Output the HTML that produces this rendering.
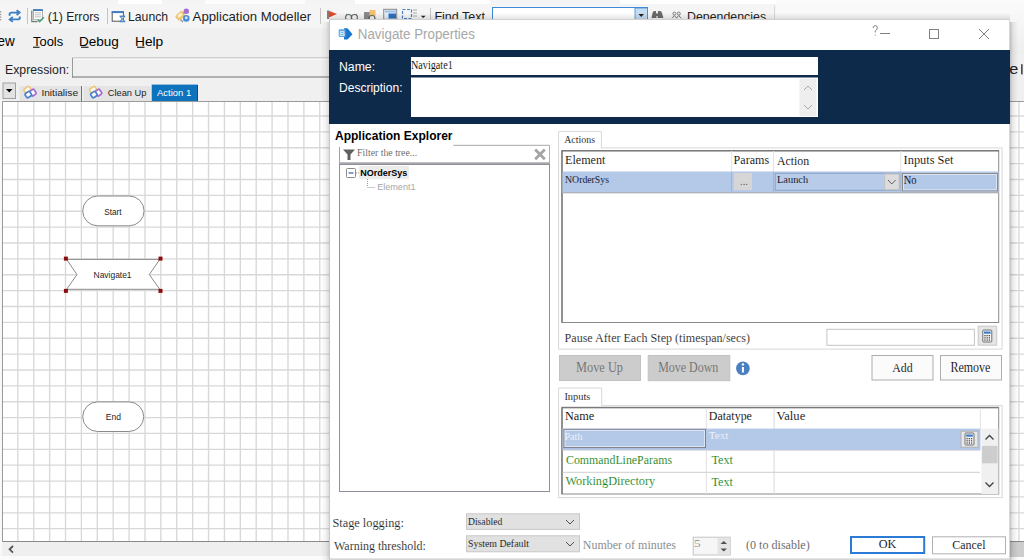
<!DOCTYPE html>
<html><head><meta charset="utf-8"><style>
html,body{margin:0;padding:0;background:#f0f0f0;width:1024px;height:560px;overflow:hidden;}
svg{display:block;}
</style></head><body>
<svg width="1024" height="560" viewBox="0 0 1024 560">
<rect x="0" y="0" width="1024" height="560" fill="#f0f0f0" rx="0" />
<rect x="0" y="0" width="1024" height="5" fill="#f4f4f4" rx="0" />
<rect x="118" y="0" width="44" height="4" fill="#ffffff" rx="0" />
<rect x="205" y="0" width="100" height="4" fill="#fcfcfc" rx="0" />
<rect x="355" y="0" width="135" height="4" fill="#ffffff" rx="0" />
<rect x="620" y="0" width="295" height="4" fill="#ffffff" rx="0" />
<rect x="0" y="5" width="780" height="23" fill="#f5f5f5" rx="0" />
<defs><linearGradient id="tg" x1="0" x2="0" y1="0" y2="1"><stop offset="0" stop-color="#fbfbfb"/><stop offset="1" stop-color="#eeeeee"/></linearGradient></defs>
<rect x="776" y="0" width="248" height="54" fill="url(#tg)"/>
<line x1="27.5" y1="8" x2="27.5" y2="24" stroke="#c4c4c4" stroke-width="1" />
<line x1="107.5" y1="8" x2="107.5" y2="24" stroke="#c4c4c4" stroke-width="1" />
<line x1="320.5" y1="8" x2="320.5" y2="24" stroke="#c4c4c4" stroke-width="1" />
<path d="M9.6 15.8 L9.6 14.2 Q9.6 12.6 11.4 12.6 L19 12.6" fill="none" stroke="#3d7fc4" stroke-width="1.9" />
<path d="M16.6 10.2 L19.6 12.6 L16.6 15" fill="none" stroke="#3d7fc4" stroke-width="1.9" />
<path d="M19.8 16.4 L19.8 17.8 Q19.8 19.4 18 19.4 L10.4 19.4" fill="none" stroke="#3d7fc4" stroke-width="1.9" />
<path d="M12.8 17 L9.8 19.4 L12.8 21.8" fill="none" stroke="#3d7fc4" stroke-width="1.9" />
<rect x="0" y="11.2" width="1.2" height="1.4" fill="#9a9a9a" rx="0" />
<rect x="0" y="13.8" width="1.2" height="1.4" fill="#9a9a9a" rx="0" />
<rect x="0" y="16.4" width="1.2" height="1.4" fill="#9a9a9a" rx="0" />
<rect x="0" y="19.0" width="1.2" height="1.4" fill="#9a9a9a" rx="0" />
<path d="M31.8 10.6 L31.8 21.6 L37.5 21.6" fill="none" stroke="#7a7a7a" stroke-width="1.2" />
<rect x="33.4" y="9.4" width="9" height="10.4" fill="#ffffff" stroke="#9a9a9a" stroke-width="0.8" rx="0" />
<rect x="33.2" y="9.2" width="9.4" height="1.8" fill="#3d7ac0" rx="0" />
<rect x="34.8" y="12.2" width="6.2" height="1.2" fill="#c8c8c8" rx="0" />
<rect x="34.8" y="14.2" width="6.2" height="1.2" fill="#c8c8c8" rx="0" />
<rect x="34.8" y="16.2" width="6.2" height="1.2" fill="#c8c8c8" rx="0" />
<path d="M37.8 19.6 L39.6 21.6 L43.8 17.2" fill="none" stroke="#4aa37a" stroke-width="1.6" />
<rect x="112.2" y="11.8" width="11.2" height="9.4" fill="#ffffff" stroke="#555" stroke-width="1" rx="0" />
<rect x="111.7" y="11.3" width="12.2" height="1.8" fill="#3d7cc9" rx="0" />
<path d="M119.5 15.5 L125.3 15.5 L125.3 16.5 L123.2 18.9 L125.3 21.3 L125.3 22.3 L119.5 22.3 L119.5 21.3 L121.6 18.9 L119.5 16.5 Z" fill="#4a86cc" />
<path d="M121 17 L123.8 17 L122.4 18.6 Z M121.2 20.8 L123.6 20.8 L122.4 19.6 Z" fill="#f4e6c0" />
<rect x="175.5" y="12.5" width="9.5" height="6.5" rx="2" transform="rotate(-40 180.2 15.7)" fill="#eec878"/>
<rect x="177.5" y="14" width="5" height="2.5" rx="1" transform="rotate(-40 180 15.2)" fill="#fff4d8"/>
<path d="M180.5 19.5 L183 22 M183.5 13.5 L185.5 11.5" fill="none" stroke="#8a8a8a" stroke-width="1.1" />
<circle cx="186.3" cy="11.3" r="2.7" fill="#a66cd0"/><circle cx="186.3" cy="18.4" r="3.3" fill="#4a8fd6"/><circle cx="186.3" cy="17.8" r="1.4" fill="#d8ecfb"/>
<line x1="328" y1="10.4" x2="328" y2="19" stroke="#555" stroke-width="1.5" />
<path d="M328.8 10.7 L337 14 L328.8 17.4 Z" fill="#e04a28" />
<path d="M345.5 17.5 a3 3 0 1 0 6 0 a3 3 0 1 0 -6 0 M351.5 17.5 a3 3 0 1 0 6 0 a3 3 0 1 0 -6 0 M345.5 17 L347 14 M357.5 17 L356 14" fill="none" stroke="#666" stroke-width="1.1" />
<rect x="364" y="12" width="6" height="7" fill="#8a8a8a" rx="0" />
<rect x="369.5" y="10" width="6" height="6" fill="#f0c070" rx="0" />
<circle cx="372" cy="18.5" r="3" fill="none" stroke="#666" stroke-width="1.2"/>
<rect x="383.7" y="9.3" width="13" height="10" fill="#e6eef8" stroke="#8a8a8a" stroke-width="1" rx="0" />
<rect x="385" y="10.5" width="11" height="2" fill="#9cc0e8" rx="0" />
<rect x="388.5" y="13.5" width="7.5" height="5" fill="#2d6fbf" rx="0" />
<rect x="402.5" y="9.5" width="9" height="9" fill="none" stroke="#4a7fc8" stroke-width="1.2" rx="0" stroke-dasharray="3 1.5"/>
<line x1="413" y1="10" x2="417" y2="10" stroke="#aaa" stroke-width="1" />
<line x1="413" y1="13" x2="417" y2="13" stroke="#aaa" stroke-width="1" />
<line x1="413" y1="16" x2="417" y2="16" stroke="#aaa" stroke-width="1" />
<path d="M420.8 15.8 L425.7 15.8 L423.2 18 Z" fill="#222" />
<line x1="430.5" y1="8" x2="430.5" y2="24" stroke="#c4c4c4" stroke-width="1" />
<rect x="492.5" y="7.5" width="155" height="14" fill="#ffffff" stroke="#3f8ad8" stroke-width="1" rx="0" />
<rect x="635" y="8" width="12.5" height="13" fill="#c5dcf2" stroke="#3f8ad8" stroke-width="0.8" rx="0" />
<path d="M638.5 14 L644 14 L641.2 17 Z" fill="#222" />
<path d="M651.5 18 L652.5 13 Q653 11 654.5 11 L656 11 L656.5 18 Z M657.5 18 L658 11 L660 11 Q661.5 11 662 13 L663.4 18 Z" fill="#6a6a6a" />
<rect x="655.5" y="13.5" width="3" height="2.5" fill="#6a6a6a" rx="0" />
<circle cx="674.4" cy="13.6" r="1.5" fill="none" stroke="#7a7a7a" stroke-width="1"/><circle cx="678.8" cy="13.6" r="1.5" fill="none" stroke="#7a7a7a" stroke-width="1"/>
<path d="M672 18.2 L674.4 15.5 L676.6 18.2 M676.4 18.2 L678.8 15.5 L681 18.2" fill="none" stroke="#7a7a7a" stroke-width="1" />
<line x1="774.5" y1="6" x2="774.5" y2="24" stroke="#d8d8d8" stroke-width="1" />
<line x1="33" y1="47.3" x2="39.5" y2="47.3" stroke="#333" stroke-width="1.3" />
<line x1="81" y1="47.3" x2="88.5" y2="47.3" stroke="#333" stroke-width="1.3" />
<line x1="137" y1="47.3" x2="144.5" y2="47.3" stroke="#333" stroke-width="1.3" />
<rect x="72" y="57.5" width="990" height="20" fill="#f0f0f0" rx="0" />
<line x1="72" y1="58" x2="1010" y2="58" stroke="#b0b0b0" stroke-width="1" />
<line x1="72" y1="59" x2="1010" y2="59" stroke="#ffffff" stroke-width="1" />
<line x1="72.5" y1="58" x2="72.5" y2="77.5" stroke="#9a9a9a" stroke-width="1" />
<line x1="72" y1="77" x2="1010" y2="77" stroke="#707070" stroke-width="1" />
<rect x="1010" y="54" width="14" height="48" fill="#f0f0f0" rx="0" />
<rect x="1021.1" y="64.2" width="1.5" height="10.2" fill="#3a3a3a" rx="0" />
<rect x="3" y="83" width="12.5" height="15.5" fill="#e3e3e3" stroke="#a0a0a0" stroke-width="1" rx="0" />
<path d="M6 89 L12.5 89 L9.25 92.5 Z" fill="#000" />
<rect x="19.5" y="86" width="62" height="15" fill="#e4e4e4" rx="0" />
<line x1="81.5" y1="86" x2="81.5" y2="101" stroke="#707070" stroke-width="1" />
<rect x="83.5" y="86" width="67" height="15" fill="#e4e4e4" rx="0" />
<rect x="151.7" y="84.6" width="46" height="17" fill="#0f72bd" rx="0" />
<line x1="197.5" y1="85" x2="197.5" y2="101.5" stroke="#404040" stroke-width="1" />
<rect x="24.20" y="87.40" width="6.4" height="4.6" rx="1.2" transform="rotate(-35 27.40 89.70)" fill="#fbfbfb" stroke="#efc77a" stroke-width="1.7"/>
<rect x="30.30" y="89.80" width="5.2" height="5.6" rx="1.2" transform="rotate(-35 32.90 92.60)" fill="#fbfbfb" stroke="#a46ad0" stroke-width="1.7"/>
<rect x="25.50" y="92.10" width="5.6" height="5.0" rx="1.2" transform="rotate(-35 28.30 94.60)" fill="#fbfbfb" stroke="#4683cc" stroke-width="1.7"/>
<rect x="89.80" y="87.40" width="6.4" height="4.6" rx="1.2" transform="rotate(-35 93.00 89.70)" fill="#fbfbfb" stroke="#efc77a" stroke-width="1.7"/>
<rect x="95.90" y="89.80" width="5.2" height="5.6" rx="1.2" transform="rotate(-35 98.50 92.60)" fill="#fbfbfb" stroke="#a46ad0" stroke-width="1.7"/>
<rect x="91.10" y="92.10" width="5.6" height="5.0" rx="1.2" transform="rotate(-35 93.90 94.60)" fill="#fbfbfb" stroke="#4683cc" stroke-width="1.7"/>
<rect x="3" y="102" width="1030" height="439.5" fill="#ffffff" rx="0" />
<line x1="17.85" y1="102" x2="17.85" y2="541" stroke="#d8d8d8" stroke-width="1.35" />
<line x1="33.74" y1="102" x2="33.74" y2="541" stroke="#d8d8d8" stroke-width="1.35" />
<line x1="49.63" y1="102" x2="49.63" y2="541" stroke="#d8d8d8" stroke-width="1.35" />
<line x1="65.52" y1="102" x2="65.52" y2="541" stroke="#d8d8d8" stroke-width="1.35" />
<line x1="81.41" y1="102" x2="81.41" y2="541" stroke="#d8d8d8" stroke-width="1.35" />
<line x1="97.30" y1="102" x2="97.30" y2="541" stroke="#d8d8d8" stroke-width="1.35" />
<line x1="113.19" y1="102" x2="113.19" y2="541" stroke="#d8d8d8" stroke-width="1.35" />
<line x1="129.08" y1="102" x2="129.08" y2="541" stroke="#d8d8d8" stroke-width="1.35" />
<line x1="144.97" y1="102" x2="144.97" y2="541" stroke="#d8d8d8" stroke-width="1.35" />
<line x1="160.86" y1="102" x2="160.86" y2="541" stroke="#d8d8d8" stroke-width="1.35" />
<line x1="176.75" y1="102" x2="176.75" y2="541" stroke="#d8d8d8" stroke-width="1.35" />
<line x1="192.64" y1="102" x2="192.64" y2="541" stroke="#d8d8d8" stroke-width="1.35" />
<line x1="208.53" y1="102" x2="208.53" y2="541" stroke="#d8d8d8" stroke-width="1.35" />
<line x1="224.42" y1="102" x2="224.42" y2="541" stroke="#d8d8d8" stroke-width="1.35" />
<line x1="240.31" y1="102" x2="240.31" y2="541" stroke="#d8d8d8" stroke-width="1.35" />
<line x1="256.20" y1="102" x2="256.20" y2="541" stroke="#d8d8d8" stroke-width="1.35" />
<line x1="272.09" y1="102" x2="272.09" y2="541" stroke="#d8d8d8" stroke-width="1.35" />
<line x1="287.98" y1="102" x2="287.98" y2="541" stroke="#d8d8d8" stroke-width="1.35" />
<line x1="303.87" y1="102" x2="303.87" y2="541" stroke="#d8d8d8" stroke-width="1.35" />
<line x1="319.76" y1="102" x2="319.76" y2="541" stroke="#d8d8d8" stroke-width="1.35" />
<line x1="335.65" y1="102" x2="335.65" y2="541" stroke="#d8d8d8" stroke-width="1.35" />
<line x1="351.54" y1="102" x2="351.54" y2="541" stroke="#d8d8d8" stroke-width="1.35" />
<line x1="367.43" y1="102" x2="367.43" y2="541" stroke="#d8d8d8" stroke-width="1.35" />
<line x1="383.32" y1="102" x2="383.32" y2="541" stroke="#d8d8d8" stroke-width="1.35" />
<line x1="399.21" y1="102" x2="399.21" y2="541" stroke="#d8d8d8" stroke-width="1.35" />
<line x1="415.10" y1="102" x2="415.10" y2="541" stroke="#d8d8d8" stroke-width="1.35" />
<line x1="430.99" y1="102" x2="430.99" y2="541" stroke="#d8d8d8" stroke-width="1.35" />
<line x1="446.88" y1="102" x2="446.88" y2="541" stroke="#d8d8d8" stroke-width="1.35" />
<line x1="462.77" y1="102" x2="462.77" y2="541" stroke="#d8d8d8" stroke-width="1.35" />
<line x1="478.66" y1="102" x2="478.66" y2="541" stroke="#d8d8d8" stroke-width="1.35" />
<line x1="494.55" y1="102" x2="494.55" y2="541" stroke="#d8d8d8" stroke-width="1.35" />
<line x1="510.44" y1="102" x2="510.44" y2="541" stroke="#d8d8d8" stroke-width="1.35" />
<line x1="526.33" y1="102" x2="526.33" y2="541" stroke="#d8d8d8" stroke-width="1.35" />
<line x1="542.22" y1="102" x2="542.22" y2="541" stroke="#d8d8d8" stroke-width="1.35" />
<line x1="558.11" y1="102" x2="558.11" y2="541" stroke="#d8d8d8" stroke-width="1.35" />
<line x1="574.00" y1="102" x2="574.00" y2="541" stroke="#d8d8d8" stroke-width="1.35" />
<line x1="589.89" y1="102" x2="589.89" y2="541" stroke="#d8d8d8" stroke-width="1.35" />
<line x1="605.78" y1="102" x2="605.78" y2="541" stroke="#d8d8d8" stroke-width="1.35" />
<line x1="621.67" y1="102" x2="621.67" y2="541" stroke="#d8d8d8" stroke-width="1.35" />
<line x1="637.56" y1="102" x2="637.56" y2="541" stroke="#d8d8d8" stroke-width="1.35" />
<line x1="653.45" y1="102" x2="653.45" y2="541" stroke="#d8d8d8" stroke-width="1.35" />
<line x1="669.34" y1="102" x2="669.34" y2="541" stroke="#d8d8d8" stroke-width="1.35" />
<line x1="685.23" y1="102" x2="685.23" y2="541" stroke="#d8d8d8" stroke-width="1.35" />
<line x1="701.12" y1="102" x2="701.12" y2="541" stroke="#d8d8d8" stroke-width="1.35" />
<line x1="717.01" y1="102" x2="717.01" y2="541" stroke="#d8d8d8" stroke-width="1.35" />
<line x1="732.90" y1="102" x2="732.90" y2="541" stroke="#d8d8d8" stroke-width="1.35" />
<line x1="748.79" y1="102" x2="748.79" y2="541" stroke="#d8d8d8" stroke-width="1.35" />
<line x1="764.68" y1="102" x2="764.68" y2="541" stroke="#d8d8d8" stroke-width="1.35" />
<line x1="780.57" y1="102" x2="780.57" y2="541" stroke="#d8d8d8" stroke-width="1.35" />
<line x1="796.46" y1="102" x2="796.46" y2="541" stroke="#d8d8d8" stroke-width="1.35" />
<line x1="812.35" y1="102" x2="812.35" y2="541" stroke="#d8d8d8" stroke-width="1.35" />
<line x1="828.24" y1="102" x2="828.24" y2="541" stroke="#d8d8d8" stroke-width="1.35" />
<line x1="844.13" y1="102" x2="844.13" y2="541" stroke="#d8d8d8" stroke-width="1.35" />
<line x1="860.02" y1="102" x2="860.02" y2="541" stroke="#d8d8d8" stroke-width="1.35" />
<line x1="875.91" y1="102" x2="875.91" y2="541" stroke="#d8d8d8" stroke-width="1.35" />
<line x1="891.80" y1="102" x2="891.80" y2="541" stroke="#d8d8d8" stroke-width="1.35" />
<line x1="907.69" y1="102" x2="907.69" y2="541" stroke="#d8d8d8" stroke-width="1.35" />
<line x1="923.58" y1="102" x2="923.58" y2="541" stroke="#d8d8d8" stroke-width="1.35" />
<line x1="939.47" y1="102" x2="939.47" y2="541" stroke="#d8d8d8" stroke-width="1.35" />
<line x1="955.36" y1="102" x2="955.36" y2="541" stroke="#d8d8d8" stroke-width="1.35" />
<line x1="971.25" y1="102" x2="971.25" y2="541" stroke="#d8d8d8" stroke-width="1.35" />
<line x1="987.14" y1="102" x2="987.14" y2="541" stroke="#d8d8d8" stroke-width="1.35" />
<line x1="1003.03" y1="102" x2="1003.03" y2="541" stroke="#d8d8d8" stroke-width="1.35" />
<line x1="1018.92" y1="102" x2="1018.92" y2="541" stroke="#d8d8d8" stroke-width="1.35" />
<line x1="3" y1="116.00" x2="1024" y2="116.00" stroke="#d8d8d8" stroke-width="1.35" />
<line x1="3" y1="131.87" x2="1024" y2="131.87" stroke="#d8d8d8" stroke-width="1.35" />
<line x1="3" y1="147.74" x2="1024" y2="147.74" stroke="#d8d8d8" stroke-width="1.35" />
<line x1="3" y1="163.62" x2="1024" y2="163.62" stroke="#d8d8d8" stroke-width="1.35" />
<line x1="3" y1="179.49" x2="1024" y2="179.49" stroke="#d8d8d8" stroke-width="1.35" />
<line x1="3" y1="195.36" x2="1024" y2="195.36" stroke="#d8d8d8" stroke-width="1.35" />
<line x1="3" y1="211.23" x2="1024" y2="211.23" stroke="#d8d8d8" stroke-width="1.35" />
<line x1="3" y1="227.10" x2="1024" y2="227.10" stroke="#d8d8d8" stroke-width="1.35" />
<line x1="3" y1="242.98" x2="1024" y2="242.98" stroke="#d8d8d8" stroke-width="1.35" />
<line x1="3" y1="258.85" x2="1024" y2="258.85" stroke="#d8d8d8" stroke-width="1.35" />
<line x1="3" y1="274.72" x2="1024" y2="274.72" stroke="#d8d8d8" stroke-width="1.35" />
<line x1="3" y1="290.59" x2="1024" y2="290.59" stroke="#d8d8d8" stroke-width="1.35" />
<line x1="3" y1="306.46" x2="1024" y2="306.46" stroke="#d8d8d8" stroke-width="1.35" />
<line x1="3" y1="322.34" x2="1024" y2="322.34" stroke="#d8d8d8" stroke-width="1.35" />
<line x1="3" y1="338.21" x2="1024" y2="338.21" stroke="#d8d8d8" stroke-width="1.35" />
<line x1="3" y1="354.08" x2="1024" y2="354.08" stroke="#d8d8d8" stroke-width="1.35" />
<line x1="3" y1="369.95" x2="1024" y2="369.95" stroke="#d8d8d8" stroke-width="1.35" />
<line x1="3" y1="385.82" x2="1024" y2="385.82" stroke="#d8d8d8" stroke-width="1.35" />
<line x1="3" y1="401.70" x2="1024" y2="401.70" stroke="#d8d8d8" stroke-width="1.35" />
<line x1="3" y1="417.57" x2="1024" y2="417.57" stroke="#d8d8d8" stroke-width="1.35" />
<line x1="3" y1="433.44" x2="1024" y2="433.44" stroke="#d8d8d8" stroke-width="1.35" />
<line x1="3" y1="449.31" x2="1024" y2="449.31" stroke="#d8d8d8" stroke-width="1.35" />
<line x1="3" y1="465.18" x2="1024" y2="465.18" stroke="#d8d8d8" stroke-width="1.35" />
<line x1="3" y1="481.06" x2="1024" y2="481.06" stroke="#d8d8d8" stroke-width="1.35" />
<line x1="3" y1="496.93" x2="1024" y2="496.93" stroke="#d8d8d8" stroke-width="1.35" />
<line x1="3" y1="512.80" x2="1024" y2="512.80" stroke="#d8d8d8" stroke-width="1.35" />
<line x1="3" y1="528.67" x2="1024" y2="528.67" stroke="#d8d8d8" stroke-width="1.35" />
<line x1="2.5" y1="101.5" x2="2.5" y2="541.5" stroke="#9a9a9a" stroke-width="1" />
<line x1="2.5" y1="101.5" x2="1024" y2="101.5" stroke="#9a9a9a" stroke-width="1" />
<line x1="2.5" y1="541.5" x2="1024" y2="541.5" stroke="#8a8a8a" stroke-width="1" />
<rect x="0" y="100" width="2" height="460" fill="#f8f8f8" rx="0" />
<rect x="3" y="542" width="1021" height="14" fill="#efefef" rx="0" />
<path d="M13 546 L9.6 549.3 L13 552.6" fill="none" stroke="#555" stroke-width="1.8" />
<rect x="0" y="556" width="1024" height="4" fill="#fbfbfb" rx="0" />
<rect x="1000" y="542" width="24" height="15" fill="#cdcdcd" rx="0" />
<rect x="82.7" y="196" width="61.4" height="29.8" fill="#ffffff" stroke="#8a8a8a" stroke-width="1" rx="14.9" />
<rect x="82.7" y="401.9" width="61" height="29.6" fill="#ffffff" stroke="#8a8a8a" stroke-width="1" rx="14.8" />
<path d="M66.6 259.4 L159.8 259.4 L149.3 274.6 L159.8 289.3 L66.6 289.3 L77 274.6 Z" fill="#ffffff" stroke="#8a8a8a" stroke-width="1" />
<rect x="63.900000000000006" y="256.6" width="4" height="4" fill="#8b0d0d" rx="0" />
<rect x="158.5" y="256.6" width="4" height="4" fill="#8b0d0d" rx="0" />
<rect x="63.900000000000006" y="288.9" width="4" height="4" fill="#8b0d0d" rx="0" />
<rect x="158.5" y="288.9" width="4" height="4" fill="#8b0d0d" rx="0" />
<text x="47.80" y="21.2" font-family='"Liberation Sans", sans-serif' font-size="12.97" font-weight="normal" fill="#1e1e1e" textLength="51.63" lengthAdjust="spacingAndGlyphs" >(1) Errors</text>
<text x="128.00" y="21.2" font-family='"Liberation Sans", sans-serif' font-size="12.97" font-weight="normal" fill="#1e1e1e" textLength="40.11" lengthAdjust="spacingAndGlyphs" >Launch</text>
<text x="192.60" y="21.2" font-family='"Liberation Sans", sans-serif' font-size="12.97" font-weight="normal" fill="#1e1e1e" textLength="118.66" lengthAdjust="spacingAndGlyphs" >Application Modeller</text>
<text x="434.40" y="21.2" font-family='"Liberation Sans", sans-serif' font-size="12.97" font-weight="normal" fill="#1e1e1e" textLength="50.72" lengthAdjust="spacingAndGlyphs" >Find Text</text>
<text x="687.00" y="21.2" font-family='"Liberation Sans", sans-serif' font-size="12.97" font-weight="normal" fill="#1e1e1e" textLength="79.07" lengthAdjust="spacingAndGlyphs" >Dependencies</text>
<text x="-2.50" y="45.8" font-family='"Liberation Sans", sans-serif' font-size="13.75" font-weight="normal" fill="#000" textLength="17.16" lengthAdjust="spacingAndGlyphs" >ew</text>
<text x="33.00" y="45.8" font-family='"Liberation Sans", sans-serif' font-size="13.66" font-weight="normal" fill="#000" textLength="30.19" lengthAdjust="spacingAndGlyphs" >Tools</text>
<text x="79.00" y="45.8" font-family='"Liberation Sans", sans-serif' font-size="13.66" font-weight="normal" fill="#000" textLength="39.84" lengthAdjust="spacingAndGlyphs" >Debug</text>
<text x="135.00" y="45.8" font-family='"Liberation Sans", sans-serif' font-size="13.66" font-weight="normal" fill="#000" textLength="28.26" lengthAdjust="spacingAndGlyphs" >Help</text>
<text x="5.00" y="73.5" font-family='"Liberation Sans", sans-serif' font-size="12.97" font-weight="normal" fill="#1e1e1e" textLength="64.12" lengthAdjust="spacingAndGlyphs" >Expression:</text>
<text x="1009.20" y="74.2" font-family='"Liberation Sans", sans-serif' font-size="15.06" font-weight="normal" fill="#222" textLength="9.11" lengthAdjust="spacingAndGlyphs" >e</text>
<text x="41.40" y="95.6" font-family='"Liberation Sans", sans-serif' font-size="9.38" font-weight="normal" fill="#1e1e1e" textLength="36.64" lengthAdjust="spacingAndGlyphs" >Initialise</text>
<text x="107.80" y="95.6" font-family='"Liberation Sans", sans-serif' font-size="9.38" font-weight="normal" fill="#1e1e1e" textLength="38.58" lengthAdjust="spacingAndGlyphs" >Clean Up</text>
<text x="157.00" y="95.6" font-family='"Liberation Sans", sans-serif' font-size="9.38" font-weight="normal" fill="#ffffff" textLength="34.31" lengthAdjust="spacingAndGlyphs" >Action 1</text>
<text x="104.20" y="214.6" font-family='"Liberation Sans", sans-serif' font-size="9.46" font-weight="normal" fill="#1e1e1e" textLength="17.47" lengthAdjust="spacingAndGlyphs" >Start</text>
<text x="93.60" y="278.4" font-family='"Liberation Sans", sans-serif' font-size="9.52" font-weight="normal" fill="#1e1e1e" textLength="37.95" lengthAdjust="spacingAndGlyphs" >Navigate1</text>
<text x="105.80" y="420.2" font-family='"Liberation Sans", sans-serif' font-size="8.28" font-weight="normal" fill="#1e1e1e" textLength="15.18" lengthAdjust="spacingAndGlyphs" >End</text>
<defs><linearGradient id="shR" x1="0" x2="1" y1="0" y2="0"><stop offset="0" stop-color="#000" stop-opacity="0.22"/><stop offset="0.35" stop-color="#000" stop-opacity="0.08"/><stop offset="1" stop-color="#000" stop-opacity="0"/></linearGradient><linearGradient id="shL" x1="1" x2="0" y1="0" y2="0"><stop offset="0" stop-color="#000" stop-opacity="0.14"/><stop offset="0.4" stop-color="#000" stop-opacity="0.05"/><stop offset="1" stop-color="#000" stop-opacity="0"/></linearGradient><linearGradient id="shT" x1="0" x2="0" y1="1" y2="0"><stop offset="0" stop-color="#000" stop-opacity="0.10"/><stop offset="1" stop-color="#000" stop-opacity="0"/></linearGradient><linearGradient id="shB" x1="0" x2="0" y1="0" y2="1"><stop offset="0" stop-color="#000" stop-opacity="0.2"/><stop offset="1" stop-color="#000" stop-opacity="0"/></linearGradient></defs>
<rect x="1010" y="22" width="8" height="538" fill="url(#shR)"/>
<rect x="321" y="22" width="8" height="538" fill="url(#shL)"/>
<rect x="329" y="13" width="681" height="6" fill="url(#shT)"/>
<rect x="329" y="559" width="681" height="1" fill="url(#shB)"/>
<rect x="329" y="19" width="681" height="540" fill="#ffffff" rx="0" />
<line x1="329.5" y1="19" x2="329.5" y2="559" stroke="#c8c8c8" stroke-width="1" />
<line x1="329" y1="19.5" x2="1010" y2="19.5" stroke="#d0d0d0" stroke-width="1" />
<line x1="1009.5" y1="19" x2="1009.5" y2="559" stroke="#d8d8d8" stroke-width="1" />
<line x1="329" y1="559" x2="1010" y2="559" stroke="#c8c8c8" stroke-width="1" />
<path d="M344 28.3 L347.5 28.3 L352.5 34.2 L347.5 39.6 L344 39.6 Z" fill="#1a78cc" />
<rect x="338.7" y="29.3" width="6.8" height="7.6" fill="#62a8e2" rx="1" />
<text x="339.6" y="36" font-family='"Liberation Sans", sans-serif' font-size="7.5" font-weight="bold" fill="#d8ecfb">B</text>
<path d="M873 28 Q873.5 25.5 875.5 25.5 Q877.5 25.8 877.3 28 Q877 30 875.2 31 L875.2 32.5 M875.2 34.5 L875.2 35.5" fill="none" stroke="#808080" stroke-width="1" />
<line x1="880" y1="33.5" x2="890" y2="33.5" stroke="#808080" stroke-width="1" />
<rect x="929.5" y="29.5" width="9" height="9" fill="none" stroke="#808080" stroke-width="1" rx="0" />
<path d="M979 29 L989 39 M989 29 L979 39" fill="none" stroke="#808080" stroke-width="1" />
<rect x="329" y="50" width="681" height="74" fill="#0e2a4b" rx="0" />
<rect x="411" y="57" width="407" height="18" fill="#ffffff" rx="0" />
<rect x="411" y="77.5" width="407" height="39.5" fill="#ffffff" rx="0" />
<rect x="799.5" y="78.5" width="17" height="37.5" fill="#eeeeee" rx="0" />
<path d="M804 90 L808 86 L812 90" fill="none" stroke="#a8a8a8" stroke-width="1" />
<path d="M804 105 L808 109 L812 105" fill="none" stroke="#a8a8a8" stroke-width="1" />
<rect x="339.5" y="145.5" width="210" height="17.5" fill="#ffffff" rx="0" />
<line x1="453.3" y1="145.3" x2="549.5" y2="145.3" stroke="#a8a8a8" stroke-width="1" />
<line x1="339.5" y1="147" x2="339.5" y2="163" stroke="#a0a0a0" stroke-width="1" />
<line x1="549.5" y1="145.3" x2="549.5" y2="163" stroke="#b0b0b0" stroke-width="1" />
<line x1="339" y1="163.2" x2="550" y2="163.2" stroke="#a8a8a8" stroke-width="1.8" />
<path d="M343 149.5 L355 149.5 L350.5 154.5 L350.5 160 L347.5 160 L347.5 154.5 Z" fill="#606060" />
<path d="M535.2 149.6 L544.8 159.2 M544.8 149.6 L535.2 159.2" fill="none" stroke="#a4a4a4" stroke-width="2.8" />
<rect x="339.5" y="164.5" width="210" height="327" fill="#ffffff" stroke="#8e909c" stroke-width="1" rx="0" />
<rect x="359.2" y="166" width="49.8" height="13.2" fill="#ececec" rx="0" />
<rect x="346.5" y="168.5" width="9" height="9" fill="#ffffff" stroke="#8a8a8a" stroke-width="1" rx="1" />
<line x1="348.5" y1="173" x2="353.5" y2="173" stroke="#3a5fa8" stroke-width="1.2" />
<line x1="356" y1="173" x2="359" y2="173" stroke="#999" stroke-width="1" stroke-dasharray="1 1"/>
<line x1="367.5" y1="179" x2="367.5" y2="187" stroke="#999" stroke-width="1" stroke-dasharray="1 1"/>
<line x1="367.5" y1="187.5" x2="375" y2="187.5" stroke="#999" stroke-width="1" stroke-dasharray="1 1"/>
<rect x="558.6" y="147.9" width="443.5" height="201.2" fill="#ffffff" stroke="#d8d8d8" stroke-width="1" rx="0" />
<path d="M558.6 147.9 L558.6 131.4 L601.4 131.4 L601.4 147.9" fill="#ffffff" stroke="#d8d8d8" stroke-width="1" />
<rect x="559.2" y="147.2" width="41.6" height="1.6" fill="#ffffff" rx="0" />
<rect x="561.7" y="150.5" width="437" height="172" fill="#ffffff" stroke="#8a8a8a" stroke-width="1" rx="0" />
<line x1="562.2" y1="151" x2="562.2" y2="322" stroke="#6a6a6a" stroke-width="1" />
<line x1="562" y1="151" x2="999" y2="151" stroke="#6a6a6a" stroke-width="1" />
<line x1="731.6" y1="151" x2="731.6" y2="171.5" stroke="#e4e4e4" stroke-width="1" />
<line x1="773.5" y1="151" x2="773.5" y2="171.5" stroke="#e4e4e4" stroke-width="1" />
<line x1="900.8" y1="151" x2="900.8" y2="171.5" stroke="#e4e4e4" stroke-width="1" />
<rect x="562.5" y="171.5" width="436" height="21.5" fill="#b4c8e8" rx="0" />
<line x1="562.5" y1="192.8" x2="998.5" y2="192.8" stroke="#a8a8a8" stroke-width="1" />
<line x1="731.6" y1="171.5" x2="731.6" y2="193" stroke="#a0b4d4" stroke-width="1" />
<line x1="773.5" y1="171.5" x2="773.5" y2="193" stroke="#a0b4d4" stroke-width="1" />
<line x1="900.8" y1="171.5" x2="900.8" y2="193" stroke="#a0b4d4" stroke-width="1" />
<rect x="733.7" y="173" width="18.2" height="17.1" fill="#d6d6d6" rx="0" />
<rect x="775.3" y="173.3" width="124" height="17" fill="#b8cbe8" stroke="#8aa4c8" stroke-width="1" rx="0" />
<rect x="884.6" y="174" width="14.6" height="15.8" fill="#dcdcdc" stroke="#c0c0c0" stroke-width="1" rx="0" />
<path d="M888 180 L891.8 184 L895.6 180" fill="none" stroke="#606060" stroke-width="1" />
<rect x="902.5" y="173.5" width="95" height="17.3" fill="#b4c8e8" stroke="#8c8c8c" stroke-width="1" rx="0" />
<rect x="903.5" y="174.5" width="93" height="15.3" fill="none" stroke="#e6ecf6" stroke-width="0.8" rx="0" />
<rect x="826.9" y="329.3" width="147.5" height="16" fill="#ffffff" stroke="#c4c4c4" stroke-width="1" rx="0" />
<rect x="978.2" y="326.2" width="18.5" height="19" fill="#e6e6e6" stroke="#c8c8c8" stroke-width="1" rx="0" />
<rect x="982.8" y="330" width="9" height="12" fill="#f4f4f4" stroke="#707070" stroke-width="1" rx="1" />
<rect x="984.0" y="331.5" width="6.6" height="2.2" fill="#3d7cc9" rx="0" />
<rect x="984.3" y="335.0" width="1.3" height="1.3" fill="#505050" rx="0" />
<rect x="986.5" y="335.0" width="1.3" height="1.3" fill="#505050" rx="0" />
<rect x="988.6999999999999" y="335.0" width="1.3" height="1.3" fill="#505050" rx="0" />
<rect x="984.3" y="337.2" width="1.3" height="1.3" fill="#505050" rx="0" />
<rect x="986.5" y="337.2" width="1.3" height="1.3" fill="#505050" rx="0" />
<rect x="988.6999999999999" y="337.2" width="1.3" height="1.3" fill="#505050" rx="0" />
<rect x="984.3" y="339.4" width="1.3" height="1.3" fill="#505050" rx="0" />
<rect x="986.5" y="339.4" width="1.3" height="1.3" fill="#505050" rx="0" />
<rect x="988.6999999999999" y="339.4" width="1.3" height="1.3" fill="#505050" rx="0" />
<rect x="559.5" y="355.5" width="81" height="25" fill="#cccccc" stroke="#c2c2c2" stroke-width="1" rx="0" />
<rect x="648.2" y="355.5" width="81.6" height="25.2" fill="#cccccc" stroke="#c2c2c2" stroke-width="1" rx="0" />
<circle cx="742.9" cy="368.4" r="6.8" fill="#4a80bf"/>
<rect x="741.9" y="367" width="2" height="5.5" fill="#ffffff" rx="0" />
<circle cx="742.9" cy="364.4" r="1.2" fill="#ffffff"/>
<rect x="872" y="355.5" width="61" height="24.5" fill="#fbfbfb" stroke="#adadad" stroke-width="1" rx="0" />
<rect x="940.5" y="355.5" width="61" height="24.5" fill="#fbfbfb" stroke="#adadad" stroke-width="1" rx="0" />
<rect x="558.6" y="405.6" width="443.5" height="92" fill="#ffffff" stroke="#d8d8d8" stroke-width="1" rx="0" />
<path d="M558.6 405.6 L558.6 388 L601.7 388 L601.7 405.6" fill="#ffffff" stroke="#d8d8d8" stroke-width="1" />
<rect x="559.2" y="404.9" width="41.9" height="1.6" fill="#ffffff" rx="0" />
<rect x="561.7" y="407.3" width="437" height="86.69999999999999" fill="#ffffff" stroke="#8a8a8a" stroke-width="1" rx="0" />
<line x1="562.2" y1="407.8" x2="562.2" y2="494" stroke="#6a6a6a" stroke-width="1" />
<line x1="562" y1="407.8" x2="998" y2="407.8" stroke="#6a6a6a" stroke-width="1" />
<line x1="706.3" y1="408" x2="706.3" y2="494" stroke="#e0e0e0" stroke-width="1" />
<line x1="774.1" y1="408" x2="774.1" y2="494" stroke="#d8d8d8" stroke-width="1" />
<line x1="980.4" y1="408" x2="980.4" y2="428.6" stroke="#e4e4e4" stroke-width="1" />
<rect x="562.5" y="428.6" width="418" height="21.4" fill="#b4c8e8" rx="0" />
<line x1="562.5" y1="472.3" x2="980" y2="472.3" stroke="#cfcfcf" stroke-width="1" />
<line x1="562.5" y1="450.5" x2="980" y2="450.5" stroke="#e0e0e0" stroke-width="1" />
<rect x="564" y="429.3" width="141.5" height="18.3" fill="#b4c8e8" stroke="#7c7c84" stroke-width="1" rx="0" />
<rect x="565" y="430.3" width="139.5" height="16.3" fill="none" stroke="#e8eef8" stroke-width="0.8" rx="0" />
<rect x="961" y="431.2" width="17" height="16" fill="#e8e8e8" stroke="#b0b0b0" stroke-width="1" rx="0" />
<rect x="965" y="433" width="9" height="12" fill="#f4f4f4" stroke="#707070" stroke-width="1" rx="1" />
<rect x="966.2" y="434.5" width="6.6" height="2.2" fill="#3d7cc9" rx="0" />
<rect x="966.5" y="438.0" width="1.3" height="1.3" fill="#505050" rx="0" />
<rect x="968.7" y="438.0" width="1.3" height="1.3" fill="#505050" rx="0" />
<rect x="970.9" y="438.0" width="1.3" height="1.3" fill="#505050" rx="0" />
<rect x="966.5" y="440.2" width="1.3" height="1.3" fill="#505050" rx="0" />
<rect x="968.7" y="440.2" width="1.3" height="1.3" fill="#505050" rx="0" />
<rect x="970.9" y="440.2" width="1.3" height="1.3" fill="#505050" rx="0" />
<rect x="966.5" y="442.4" width="1.3" height="1.3" fill="#505050" rx="0" />
<rect x="968.7" y="442.4" width="1.3" height="1.3" fill="#505050" rx="0" />
<rect x="970.9" y="442.4" width="1.3" height="1.3" fill="#505050" rx="0" />
<rect x="981.4" y="428.6" width="17" height="65.4" fill="#f0f0f0" rx="0" />
<rect x="982" y="445.9" width="15.5" height="17.4" fill="#cdcdcd" rx="0" />
<path d="M985.5 439.5 L989.5 435.5 L993.5 439.5" fill="none" stroke="#404040" stroke-width="1.3" />
<path d="M985.5 482.5 L989.5 486.5 L993.5 482.5" fill="none" stroke="#404040" stroke-width="1.3" />
<rect x="466.5" y="513.8" width="113" height="15.6" fill="#e1e1e1" stroke="#c8c8c8" stroke-width="1" rx="0" />
<rect x="466.5" y="535.8" width="113" height="16" fill="#e1e1e1" stroke="#c8c8c8" stroke-width="1" rx="0" />
<path d="M566 520 L570 524 L574 520" fill="none" stroke="#505050" stroke-width="1" />
<path d="M566 542 L570 546 L574 542" fill="none" stroke="#505050" stroke-width="1" />
<rect x="693.2" y="537.2" width="37" height="17.8" fill="#f6f6f6" stroke="#c4c4c4" stroke-width="1" rx="0" />
<rect x="717.6" y="537.8" width="12.4" height="16.6" fill="#e4e4e4" rx="0" />
<path d="M720.5 544 L723.8 541 L727 544 Z" fill="#505050" />
<path d="M720.5 548.5 L723.8 551.5 L727 548.5 Z" fill="#505050" />
<rect x="851" y="537" width="73.2" height="16" fill="#ffffff" stroke="#2b7ad6" stroke-width="2" rx="0" />
<rect x="932.5" y="536.8" width="73" height="17" fill="#ffffff" stroke="#b0b0b0" stroke-width="1" rx="0" />
<text x="357.80" y="38.7" font-family='"Liberation Sans", sans-serif' font-size="14.48" font-weight="normal" fill="#a8a8a8" textLength="117.11" lengthAdjust="spacingAndGlyphs" >Navigate Properties</text>
<text x="339.00" y="70.9" font-family='"Liberation Sans", sans-serif' font-size="12.50" font-weight="normal" fill="#ffffff" textLength="36.06" lengthAdjust="spacingAndGlyphs" >Name:</text>
<text x="339.00" y="92.3" font-family='"Liberation Sans", sans-serif' font-size="11.86" font-weight="normal" fill="#ffffff" textLength="63.53" lengthAdjust="spacingAndGlyphs" >Description:</text>
<text x="411.00" y="68.6" font-family='"Liberation Serif", serif' font-size="12.99" font-weight="normal" fill="#000" stroke="#ffffff" stroke-width="0.12" textLength="41.79" lengthAdjust="spacingAndGlyphs" >Navigate1</text>
<text x="335.00" y="139.7" font-family='"Liberation Sans", sans-serif' font-size="12.69" font-weight="bold" fill="#000" textLength="117.54" lengthAdjust="spacingAndGlyphs" >Application Explorer</text>
<text x="357.00" y="155.5" font-family='"Liberation Serif", serif' font-size="10.37" font-weight="normal" fill="#555555" stroke="#ffffff" stroke-width="0.12" textLength="60.19" lengthAdjust="spacingAndGlyphs" >Filter the tree...</text>
<text x="360.20" y="175.9" font-family='"Liberation Sans", sans-serif' font-size="9.10" font-weight="bold" fill="#000" textLength="47.14" lengthAdjust="spacingAndGlyphs" >NOrderSys</text>
<text x="377.20" y="189.6" font-family='"Liberation Sans", sans-serif' font-size="8.97" font-weight="normal" fill="#a8a8a8" textLength="38.33" lengthAdjust="spacingAndGlyphs" >Element1</text>
<text x="564.20" y="142.9" font-family='"Liberation Serif", serif' font-size="10.27" font-weight="normal" fill="#000" stroke="#ffffff" stroke-width="0.12" textLength="30.88" lengthAdjust="spacingAndGlyphs" >Actions</text>
<text x="565.00" y="164.3" font-family='"Liberation Serif", serif' font-size="12.39" font-weight="normal" fill="#000" stroke="#ffffff" stroke-width="0.12" textLength="40.38" lengthAdjust="spacingAndGlyphs" >Element</text>
<text x="733.60" y="164.1" font-family='"Liberation Serif", serif' font-size="13.13" font-weight="normal" fill="#000" stroke="#ffffff" stroke-width="0.12" textLength="35.53" lengthAdjust="spacingAndGlyphs" >Params</text>
<text x="777.00" y="165" font-family='"Liberation Serif", serif' font-size="12.99" font-weight="normal" fill="#000" stroke="#ffffff" stroke-width="0.12" textLength="32.18" lengthAdjust="spacingAndGlyphs" >Action</text>
<text x="903.60" y="164.3" font-family='"Liberation Serif", serif' font-size="12.99" font-weight="normal" fill="#000" stroke="#ffffff" stroke-width="0.12" textLength="49.77" lengthAdjust="spacingAndGlyphs" >Inputs Set</text>
<text x="565.00" y="182.9" font-family='"Liberation Serif", serif' font-size="10.37" font-weight="normal" fill="#000" stroke="#b4c8e8" stroke-width="0.12" textLength="44.02" lengthAdjust="spacingAndGlyphs" >NOrderSys</text>
<text x="740.00" y="185" font-family='"Liberation Serif", serif' font-size="11.00" font-weight="normal" fill="#444" stroke="#ffffff" stroke-width="0.12" textLength="8.00" lengthAdjust="spacingAndGlyphs" >...</text>
<text x="777.00" y="183" font-family='"Liberation Serif", serif' font-size="10.66" font-weight="normal" fill="#000" stroke="#b8cbe8" stroke-width="0.12" textLength="31.12" lengthAdjust="spacingAndGlyphs" >Launch</text>
<text x="903.80" y="184" font-family='"Liberation Serif", serif' font-size="12.21" font-weight="normal" fill="#000" stroke="#b4c8e8" stroke-width="0.12" textLength="12.78" lengthAdjust="spacingAndGlyphs" >No</text>
<text x="564.60" y="341.7" font-family='"Liberation Serif", serif' font-size="12.36" font-weight="normal" fill="#222" stroke="#ffffff" stroke-width="0.12" textLength="185.42" lengthAdjust="spacingAndGlyphs" >Pause After Each Step (timespan/secs)</text>
<text x="576.00" y="371.8" font-family='"Liberation Serif", serif' font-size="13.59" font-weight="normal" fill="#6d6d6d" stroke="#cccccc" stroke-width="0.12" textLength="47.02" lengthAdjust="spacingAndGlyphs" >Move Up</text>
<text x="658.20" y="372" font-family='"Liberation Serif", serif' font-size="13.59" font-weight="normal" fill="#6d6d6d" stroke="#cccccc" stroke-width="0.12" textLength="60.13" lengthAdjust="spacingAndGlyphs" >Move Down</text>
<text x="892.20" y="371.7" font-family='"Liberation Serif", serif' font-size="12.82" font-weight="normal" fill="#000" stroke="#fbfbfb" stroke-width="0.12" textLength="20.39" lengthAdjust="spacingAndGlyphs" >Add</text>
<text x="950.40" y="371.7" font-family='"Liberation Serif", serif' font-size="13.59" font-weight="normal" fill="#000" stroke="#fbfbfb" stroke-width="0.12" textLength="39.95" lengthAdjust="spacingAndGlyphs" >Remove</text>
<text x="564.40" y="399.8" font-family='"Liberation Serif", serif' font-size="10.38" font-weight="normal" fill="#000" stroke="#ffffff" stroke-width="0.12" textLength="25.94" lengthAdjust="spacingAndGlyphs" >Inputs</text>
<text x="565.00" y="420.3" font-family='"Liberation Serif", serif' font-size="13.13" font-weight="normal" fill="#000" stroke="#ffffff" stroke-width="0.12" textLength="29.29" lengthAdjust="spacingAndGlyphs" >Name</text>
<text x="708.80" y="420.3" font-family='"Liberation Serif", serif' font-size="13.13" font-weight="normal" fill="#000" stroke="#ffffff" stroke-width="0.12" textLength="43.10" lengthAdjust="spacingAndGlyphs" >Datatype</text>
<text x="776.60" y="420.3" font-family='"Liberation Serif", serif' font-size="12.39" font-weight="normal" fill="#000" stroke="#ffffff" stroke-width="0.12" textLength="28.63" lengthAdjust="spacingAndGlyphs" >Value</text>
<text x="564.40" y="440.3" font-family='"Liberation Serif", serif' font-size="10.09" font-weight="normal" fill="#f4f8ff" stroke="#b4c8e8" stroke-width="0.12" textLength="18.15" lengthAdjust="spacingAndGlyphs" >Path</text>
<text x="708.80" y="439" font-family='"Liberation Serif", serif' font-size="10.69" font-weight="normal" fill="#f4f8ff" stroke="#b4c8e8" stroke-width="0.12" textLength="19.49" lengthAdjust="spacingAndGlyphs" >Text</text>
<text x="566.00" y="464.2" font-family='"Liberation Serif", serif' font-size="12.97" font-weight="normal" fill="#127f12" stroke="#ffffff" stroke-width="0.12" textLength="106.00" lengthAdjust="spacingAndGlyphs" >CommandLineParams</text>
<text x="711.40" y="464" font-family='"Liberation Serif", serif' font-size="13.13" font-weight="normal" fill="#127f12" stroke="#ffffff" stroke-width="0.12" textLength="21.58" lengthAdjust="spacingAndGlyphs" >Text</text>
<text x="565.50" y="485.4" font-family='"Liberation Serif", serif' font-size="11.82" font-weight="normal" fill="#127f12" stroke="#ffffff" stroke-width="0.12" textLength="89.68" lengthAdjust="spacingAndGlyphs" >WorkingDirectory</text>
<text x="711.40" y="486" font-family='"Liberation Serif", serif' font-size="13.13" font-weight="normal" fill="#127f12" stroke="#ffffff" stroke-width="0.12" textLength="21.58" lengthAdjust="spacingAndGlyphs" >Text</text>
<text x="332.40" y="527.3" font-family='"Liberation Serif", serif' font-size="12.25" font-weight="normal" fill="#222" stroke="#ffffff" stroke-width="0.12" textLength="71.56" lengthAdjust="spacingAndGlyphs" >Stage logging:</text>
<text x="334.00" y="549.5" font-family='"Liberation Serif", serif' font-size="12.25" font-weight="normal" fill="#222" stroke="#ffffff" stroke-width="0.12" textLength="91.93" lengthAdjust="spacingAndGlyphs" >Warning threshold:</text>
<text x="468.00" y="524.7" font-family='"Liberation Serif", serif' font-size="10.52" font-weight="normal" fill="#000" stroke="#e1e1e1" stroke-width="0.12" textLength="34.22" lengthAdjust="spacingAndGlyphs" >Disabled</text>
<text x="468.00" y="547" font-family='"Liberation Serif", serif' font-size="10.37" font-weight="normal" fill="#000" stroke="#e1e1e1" stroke-width="0.12" textLength="60.89" lengthAdjust="spacingAndGlyphs" >System Default</text>
<text x="582.80" y="549" font-family='"Liberation Serif", serif' font-size="12.07" font-weight="normal" fill="#7a7a7a" stroke="#ffffff" stroke-width="0.12" textLength="93.24" lengthAdjust="spacingAndGlyphs" >Number of minutes</text>
<text x="693.80" y="546.6" font-family='"Liberation Serif", serif' font-size="10.53" font-weight="normal" fill="#8a8a8a" stroke="#f6f6f6" stroke-width="0.12" textLength="6.99" lengthAdjust="spacingAndGlyphs" >5</text>
<text x="746.00" y="549" font-family='"Liberation Serif", serif' font-size="12.25" font-weight="normal" fill="#555" stroke="#ffffff" stroke-width="0.12" textLength="63.71" lengthAdjust="spacingAndGlyphs" >(0 to disable)</text>
<text x="878.80" y="548.4" font-family='"Liberation Serif", serif' font-size="12.99" font-weight="normal" fill="#000" stroke="#ffffff" stroke-width="0.12" textLength="17.60" lengthAdjust="spacingAndGlyphs" >OK</text>
<text x="952.20" y="548.5" font-family='"Liberation Serif", serif' font-size="12.39" font-weight="normal" fill="#000" stroke="#ffffff" stroke-width="0.12" textLength="33.28" lengthAdjust="spacingAndGlyphs" >Cancel</text>
</svg>
</body></html>
